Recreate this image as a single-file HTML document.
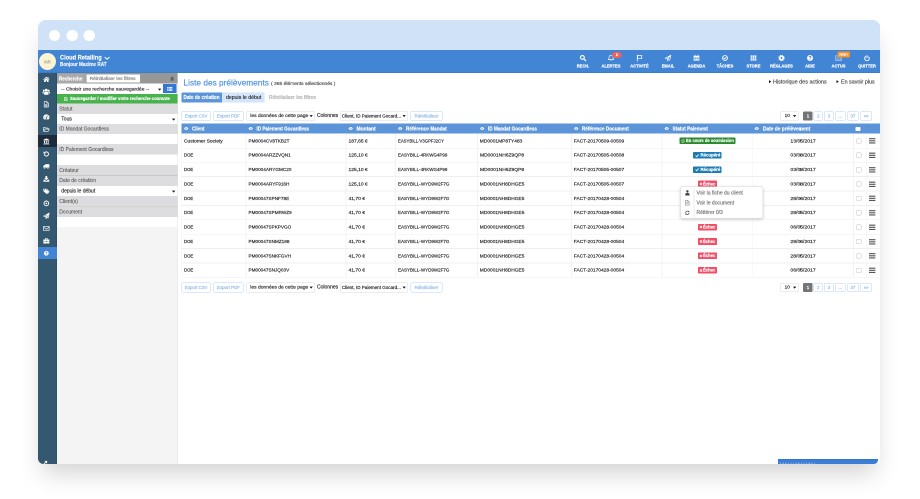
<!DOCTYPE html>
<html lang="fr"><head><meta charset="utf-8"><title>Liste des prélèvements</title>
<style>
html,body{margin:0;padding:0;background:#fff;}
html{overflow:hidden;}
body{width:920px;height:499px;overflow:hidden;position:relative;font-family:"Liberation Sans",sans-serif;}
#shadow{position:absolute;left:38px;top:20px;width:842.3px;height:444px;border-radius:8px 8px 5.5px 5.5px;box-shadow:0 14px 24px -5px rgba(0,0,0,.18);}
#win{position:absolute;left:38px;top:20px;width:1684.6px;height:888px;border-radius:16px 16px 11.0px 11.0px;overflow:hidden;background:#fff;transform:scale(0.5);transform-origin:0 0;will-change:transform;}
#win div,#win svg{position:absolute;white-space:nowrap;}
#win div{-webkit-text-stroke:.3px currentColor;}
#win svg{overflow:visible;}
</style></head><body>
<div id="shadow"></div>
<div id="win">
<div style="left:0px;top:0px;width:1684px;height:60.4px;background:#cfe2f8;"></div>
<div style="left:21.6px;top:19.6px;width:22.8px;height:22.8px;background:#fff;border-radius:50%;"></div>
<div style="left:57.2px;top:19.6px;width:22.8px;height:22.8px;background:#fff;border-radius:50%;"></div>
<div style="left:91.2px;top:19.6px;width:22.8px;height:22.8px;background:#fff;border-radius:50%;"></div>
<div style="left:0px;top:60px;width:1684px;height:46px;background:#4285d5;border-bottom:1.6px solid #3273c9;box-sizing:border-box;"></div>
<div style="left:2px;top:66.2px;width:34.2px;height:34.2px;background:#fdf4d3;border-radius:50%;"></div>
<div style="left:2px;top:73.6px;height:20px;line-height:20px;font-size:8.4px;color:#a3a398;width:34.2px;text-align:center;">MR</div>
<div style="left:44px;top:65.24px;height:20px;line-height:20px;font-size:12.8px;color:#fff;font-weight:700;transform:scaleX(0.889);transform-origin:0 50%;">Cloud Retailing</div>
<svg style="left:132.6px;top:73.1px;width:10.4px;height:7px;" viewBox="0 0 10 6"><path d="M1 1.200 L5 5 L9 1.200" fill="none" stroke="#fff" stroke-width="2" stroke-linecap="round" stroke-linejoin="round"/></svg>
<div style="left:44px;top:79.2px;height:20px;line-height:20px;font-size:10.2px;color:#f1f6fd;font-weight:700;transform:scaleX(0.910);transform-origin:0 50%;">Bonjour Maxime RAT</div>
<svg style="left:1082.6px;top:69px;width:14px;height:14px;" viewBox="0 0 16 16"><circle cx="6.600" cy="6.600" r="4.300" fill="none" stroke="#fff" stroke-width="2.600"/><path d="M10 10 L14.200 14.200" fill="none" stroke="#fff" stroke-width="3" stroke-linecap="round"/></svg>
<div style="left:1049.6px;top:82.3px;height:20px;line-height:20px;font-size:9.4px;color:#fff;font-weight:700;transform:scaleX(0.865);transform-origin:50% 50%;width:80px;text-align:center;-webkit-text-stroke:0.4px #fff;">RECH.</div>
<svg style="left:1139.44px;top:69px;width:14px;height:14px;" viewBox="0 0 16 16"><path d="M8 1.800c-2.700 0-4.300 2-4.300 4.600 0 2.600-.8 3.800-2 5h12.600c-1.200-1.200-2-2.400-2-5 0-2.600-1.600-4.600-4.300-4.600z" fill="none" stroke="#fff" stroke-width="1.500" stroke-linejoin="round"/><path d="M6.200 13a1.900 1.900 0 0 0 3.600 0z" fill="#fff"/></svg>
<div style="left:1106.44px;top:82.3px;height:20px;line-height:20px;font-size:9.4px;color:#fff;font-weight:700;transform:scaleX(0.865);transform-origin:50% 50%;width:80px;text-align:center;-webkit-text-stroke:0.4px #fff;">ALERTES</div>
<svg style="left:1196.28px;top:69px;width:14px;height:14px;" viewBox="0 0 16 16"><path d="M3 1.500v13.500" fill="none" stroke="#fff" stroke-width="1.800" stroke-linecap="round"/><path d="M3.600 2.600h10.200l-2 3.300 2 3.300H3.600z" fill="none" stroke="#fff" stroke-width="1.500" stroke-linejoin="round"/></svg>
<div style="left:1163.28px;top:82.3px;height:20px;line-height:20px;font-size:9.4px;color:#fff;font-weight:700;transform:scaleX(0.865);transform-origin:50% 50%;width:80px;text-align:center;-webkit-text-stroke:0.4px #fff;">ACTIVITÉ</div>
<svg style="left:1253.12px;top:69px;width:14px;height:14px;" viewBox="0 0 16 16"><path d="M14.600 1.400 L1.400 8.600 l4 1.600 L14.600 1.400 L7 11 v3.600 l2.200 -2.800 l3 1.200 z" fill="none" stroke="#fff" stroke-width="1.400" stroke-linejoin="round"/></svg>
<div style="left:1220.12px;top:82.3px;height:20px;line-height:20px;font-size:9.4px;color:#fff;font-weight:700;transform:scaleX(0.865);transform-origin:50% 50%;width:80px;text-align:center;-webkit-text-stroke:0.4px #fff;">EMAIL</div>
<svg style="left:1309.96px;top:69px;width:14px;height:14px;" viewBox="0 0 16 16"><path d="M1.500 3h13v11.500h-13z" fill="#fff"/><path d="M4.500 1v3.200M11.500 1v3.200" fill="none" stroke="#fff" stroke-width="1.700" stroke-linecap="round"/><path d="M2.800 6.200h10.400v7.100H2.800z" fill="#4285d5"/><path d="M3.500 6.900h2.500v2.300H3.500zM6.750 6.900h2.500v2.300H6.750zM10 6.900h2.500v2.300H10zM3.500 10.200h2.500v2.300H3.500zM6.750 10.200h2.500v2.300H6.750zM10 10.200h2.500v2.300H10z" fill="#fff"/></svg>
<div style="left:1276.96px;top:82.3px;height:20px;line-height:20px;font-size:9.4px;color:#fff;font-weight:700;transform:scaleX(0.865);transform-origin:50% 50%;width:80px;text-align:center;-webkit-text-stroke:0.4px #fff;">AGENDA</div>
<svg style="left:1366.8px;top:69px;width:14px;height:14px;" viewBox="0 0 16 16"><circle cx="8" cy="8" r="5.600" fill="none" stroke="#fff" stroke-width="2.100"/><path d="M5.400 8.200l1.900 1.900 3.500-3.800" fill="none" stroke="#fff" stroke-width="1.900" stroke-linecap="round" stroke-linejoin="round"/></svg>
<div style="left:1333.8px;top:82.3px;height:20px;line-height:20px;font-size:9.4px;color:#fff;font-weight:700;transform:scaleX(0.865);transform-origin:50% 50%;width:80px;text-align:center;-webkit-text-stroke:0.4px #fff;">TÂCHES</div>
<svg style="left:1423.64px;top:69px;width:14px;height:14px;" viewBox="0 0 16 16"><path d="M1.500 2h3.700v3.400H1.500zM6.150 2h3.700v3.400H6.150zM10.800 2h3.700v3.400h-3.700zM1.500 6.300h3.700v3.400H1.500zM6.150 6.300h3.700v3.400H6.150zM10.800 6.300h3.700v3.400h-3.700zM1.500 10.600h3.700v3.400H1.500zM6.150 10.600h3.700v3.400H6.150zM10.800 10.600h3.700v3.400h-3.700z" fill="#fff"/></svg>
<div style="left:1390.64px;top:82.3px;height:20px;line-height:20px;font-size:9.4px;color:#fff;font-weight:700;transform:scaleX(0.865);transform-origin:50% 50%;width:80px;text-align:center;-webkit-text-stroke:0.4px #fff;">STORE</div>
<svg style="left:1480.48px;top:69px;width:14px;height:14px;" viewBox="0 0 16 16"><circle cx="8" cy="8" r="4.100" fill="none" stroke="#fff" stroke-width="3.800"/><circle cx="8" cy="8" r="6.300" fill="none" stroke="#fff" stroke-width="2" stroke-dasharray="2.500 2.450"/></svg>
<div style="left:1447.48px;top:82.3px;height:20px;line-height:20px;font-size:9.4px;color:#fff;font-weight:700;transform:scaleX(0.865);transform-origin:50% 50%;width:80px;text-align:center;-webkit-text-stroke:0.4px #fff;">RÉGLAGES</div>
<svg style="left:1537.32px;top:69px;width:14px;height:14px;" viewBox="0 0 16 16"><circle cx="8" cy="8" r="6.800" fill="#fff"/><path d="M6 6.200c0-1.300.9-2.100 2.100-2.100s2 .8 2 1.800c0 1.600-2 1.600-2 3.200" fill="none" stroke="#4285d5" stroke-width="1.800"/><circle cx="8.100" cy="11.900" r="1.100" fill="#4285d5"/></svg>
<div style="left:1504.32px;top:82.3px;height:20px;line-height:20px;font-size:9.4px;color:#fff;font-weight:700;transform:scaleX(0.865);transform-origin:50% 50%;width:80px;text-align:center;-webkit-text-stroke:0.4px #fff;">AIDE</div>
<svg style="left:1594.16px;top:69px;width:14px;height:14px;" viewBox="0 0 16 16"><path d="M1.200 3h10.600v10.600H1.200z" fill="none" stroke="#fff" stroke-width="1.400" opacity=".62"/><path d="M3.200 5.600h6.600M3.200 8.200h6.600M3.200 10.800h6.600" fill="none" stroke="#fff" stroke-width="1.200" opacity=".62"/><path d="M11.800 6h3v7.600h-3" fill="none" stroke="#fff" stroke-width="1.400" opacity=".62"/></svg>
<div style="left:1561.16px;top:82.3px;height:20px;line-height:20px;font-size:9.4px;color:#fff;font-weight:700;transform:scaleX(0.865);transform-origin:50% 50%;width:80px;text-align:center;-webkit-text-stroke:0.4px #fff;">ACTUS</div>
<svg style="left:1651px;top:69px;width:14px;height:14px;" viewBox="0 0 16 16"><circle cx="8" cy="8.800" r="5.300" fill="none" stroke="#fff" stroke-width="2.200" stroke-dasharray="27.300 6" stroke-dashoffset="5.320"/><path d="M8 2.400v5" fill="none" stroke="#fff" stroke-width="2.200" stroke-linecap="round"/></svg>
<div style="left:1618px;top:82.3px;height:20px;line-height:20px;font-size:9.4px;color:#fff;font-weight:700;transform:scaleX(0.865);transform-origin:50% 50%;width:80px;text-align:center;-webkit-text-stroke:0.4px #fff;">QUITTER</div>
<div style="left:1147.8px;top:64.4px;width:19.6px;height:11.2px;background:#f06161;border-radius:5.6px;"></div>
<div style="left:1147.8px;top:60px;height:20px;line-height:20px;font-size:6.8px;color:#fff;font-weight:700;width:19.6px;text-align:center;">8</div>
<div style="left:1599.2px;top:62.6px;width:25px;height:12.4px;background:#f6932c;border-radius:3.2px;"></div>
<div style="left:1599.2px;top:58.8px;height:20px;line-height:20px;font-size:6px;color:#fff;font-weight:700;width:25px;text-align:center;">NEW !</div>
<div style="left:0px;top:106px;width:38px;height:782px;background:#34586f;"></div>
<div style="left:36.4px;top:106px;width:1.6px;height:782px;background:#2b5069;"></div>
<svg style="left:10.1px;top:112.3px;width:13.4px;height:13.4px;" viewBox="0 0 16 16"><path d="M8 1.800 L.4 8.300l1.100 1.300L8 4.100l6.500 5.500 1.100-1.300L13.200 6.200V2.800h-2v1.700z" fill="#fff"/><path d="M8 5.300 L2.700 9.800V14.400h3.900V10.800h2.800v3.600h3.900V9.800z" fill="#fff"/></svg>
<svg style="left:9.3px;top:136.3px;width:15px;height:15px;" viewBox="0 0 16 16"><circle cx="8" cy="4.700" r="3" fill="#fff"/><circle cx="2.900" cy="5.500" r="2.100" fill="#fff"/><circle cx="13.100" cy="5.500" r="2.100" fill="#fff"/><path d="M3.300 14.400v-3.200c0-2 1.500-3.300 3-3.300.5.400 1.100.6 1.700.6s1.200-.2 1.700-.6c1.500 0 3 1.300 3 3.300v3.200z" fill="#fff"/><path d="M0 11.800V10.400c0-1.600 1-2.700 2.300-2.700.4.300.8.500 1.300.5-.8.800-1.200 1.800-1.200 3.600zM16 11.800V10.400c0-1.600-1-2.700-2.300-2.700-.4.300-.8.500-1.300.5.800.8 1.200 1.800 1.200 3.600z" fill="#fff"/></svg>
<svg style="left:10.2px;top:162px;width:13.2px;height:13.2px;" viewBox="0 0 16 16"><path d="M3 1.400h6.400l3.600 3.600v9.600H3z" fill="none" stroke="#fff" stroke-width="1.600" stroke-linejoin="round"/><path d="M9.200 1.600v3.600h3.600" fill="none" stroke="#fff" stroke-width="1.300"/><path d="M5.200 8h5.600M5.200 10h5.600M5.200 12h5.600" fill="none" stroke="#fff" stroke-width="1.200"/></svg>
<svg style="left:10.1px;top:186.7px;width:13.4px;height:13.4px;" viewBox="0 0 16 16"><path d="M8 2a7.300 7.300 0 0 0-6.200 11.300c.2.400.6.700 1 .7h10.400c.4 0 .8-.3 1-.7A7.300 7.300 0 0 0 8 2z" fill="#fff"/><path d="M8 11.400 L10.300 5.800" stroke="#34586f" stroke-width="1.500" fill="none" stroke-linecap="round"/><circle cx="8" cy="11.300" r="1.600" fill="#34586f"/><circle cx="3.800" cy="9.400" r=".8" fill="#34586f"/><circle cx="5" cy="6" r=".8" fill="#34586f"/><circle cx="12.200" cy="9.400" r=".8" fill="#34586f"/></svg>
<svg style="left:10.1px;top:211.5px;width:13.4px;height:13.4px;" viewBox="0 0 16 16"><path d="M1.300 12.600v-9.200h4l1.400 1.600h5.600v2.200" fill="none" stroke="#fff" stroke-width="1.500" stroke-linejoin="round"/><path d="M1.500 12.800 L4.300 7.400h10.700l-2.800 5.400z" fill="none" stroke="#fff" stroke-width="1.500" stroke-linejoin="round"/></svg>
<div style="left:0px;top:229.8px;width:38px;height:24px;background:#1d2b3a;"></div>
<svg style="left:10.1px;top:236.3px;width:13.4px;height:13.4px;" viewBox="0 0 16 16"><path d="M8 .8 L.8 4.400v1.400h14.400V4.400z M2.400 6.600h2.400v5H2.400zM6.800 6.600h2.400v5H6.800zM11.200 6.600h2.400v5h-2.400zM1.600 12.100h12.800v1.300H1.600zM.8 13.900h14.400v1.400H.8z" fill="#fff"/></svg>
<svg style="left:10.1px;top:261.1px;width:13.4px;height:13.4px;" viewBox="0 0 16 16"><path d="M3.300 9.600A5 5 0 1 0 5 4.400" fill="none" stroke="#fff" stroke-width="2.300" stroke-linecap="round"/><path d="M1.300 1.700v5.700h5.700z" fill="#fff"/></svg>
<svg style="left:10.1px;top:285.9px;width:13.4px;height:13.4px;" viewBox="0 0 16 16"><path d="M5.400 2.800h9.800v8.600H5.400z" fill="#fff"/><path d="M.8 7.400 L2.800 4.800h2.600v6.600H.8z" fill="#fff"/><circle cx="4" cy="12.200" r="1.900" fill="#fff" stroke="#34586f" stroke-width=".9"/><circle cx="11.800" cy="12.200" r="1.900" fill="#fff" stroke="#34586f" stroke-width=".9"/></svg>
<svg style="left:10.1px;top:310.7px;width:13.4px;height:13.4px;" viewBox="0 0 16 16"><path d="M5.800 1.200h4.400v4.800h3L8 11.200 2.800 6h3z" fill="#fff"/><path d="M1.200 10.200h3.400L8 13.400l3.400-3.200h3.400v4.600H1.200z" fill="#fff"/></svg>
<svg style="left:10.1px;top:335.5px;width:13.4px;height:13.4px;" viewBox="0 0 16 16"><path d="M.8 1.800h5.600l7.200 7.200-5.400 5.400L.8 7.200z" fill="#fff"/><path d="M8.400 1.800h1.600l5.600 7.200-4.600 5.600-1.200-1 3.700-4.600z" fill="#fff"/><circle cx="3.600" cy="4.600" r="1.200" fill="#34586f"/></svg>
<svg style="left:10.1px;top:360.3px;width:13.4px;height:13.4px;" viewBox="0 0 16 16"><circle cx="8" cy="8" r="5.600" fill="none" stroke="#fff" stroke-width="2.300"/><circle cx="8" cy="8" r="2.100" fill="#fff"/></svg>
<svg style="left:10.1px;top:385.1px;width:13.4px;height:13.4px;" viewBox="0 0 16 16"><path d="M14.800 1.200 L1.200 8.600l4 1.700L14.800 1.200 7 11.100v3.700l2.300-2.900 3.100 1.300z" fill="none" stroke="#fff" stroke-width="1.500" stroke-linejoin="round"/><path d="M14.800 1.200 L7 11.100l5.400 2.100z" fill="#fff" opacity=".55"/></svg>
<svg style="left:10.1px;top:409.9px;width:13.4px;height:13.4px;" viewBox="0 0 16 16"><path d="M1.400 3.200h13.200v9.800H1.400z" fill="none" stroke="#fff" stroke-width="1.600" stroke-linejoin="round"/><path d="M1.600 5.400 L8 10l6.400-4.600" fill="none" stroke="#fff" stroke-width="1.500"/></svg>
<svg style="left:10.1px;top:434.7px;width:13.4px;height:13.4px;" viewBox="0 0 16 16"><path d="M.8 4.800h14.400v3.800H.8zM.8 9.400h5.800v1.400h2.800V9.400h5.800v5H.8z" fill="#fff"/><path d="M5.400 4.800V2.600h5.200v2.200" fill="none" stroke="#fff" stroke-width="1.500"/></svg>
<div style="left:0px;top:454px;width:38px;height:23.6px;background:#4285d5;"></div>
<svg style="left:11.2px;top:460.6px;width:11.2px;height:11.2px;" viewBox="0 0 16 16"><circle cx="8" cy="8" r="6.800" fill="#fff"/><path d="M6 6.200c0-1.300.9-2.100 2.100-2.100s2 .8 2 1.800c0 1.600-2 1.600-2 3.200" fill="none" stroke="#4285d5" stroke-width="1.800"/><circle cx="8.100" cy="11.900" r="1.100" fill="#4285d5"/></svg>
<svg style="left:8.4px;top:880.4px;width:12px;height:12px;" viewBox="0 0 16 16"><path d="M3 13 L12 4M8 3.400h4.600V8" fill="none" stroke="#fff" stroke-width="2.200" stroke-linecap="round"/></svg>
<div style="left:38px;top:106px;width:240.6px;height:782px;background:#f4f4f4;"></div>
<div style="left:278.6px;top:106px;width:1.6px;height:782px;background:#e2e2e2;"></div>
<div style="left:38px;top:106px;width:240.6px;height:21px;background:#979797;"></div>
<div style="left:38.8px;top:106.6px;width:55.8px;height:20.4px;background:#a9a9a9;"></div>
<div style="left:42.4px;top:107.08px;height:20px;line-height:20px;font-size:10.6px;color:#fff;font-weight:700;transform:scaleX(0.863);transform-origin:0 50%;">Recherche</div>
<div style="left:96.8px;top:108.8px;width:107.6px;height:16.6px;background:#fff;"></div>
<div style="left:103.2px;top:106.96px;height:20px;line-height:20px;font-size:9.8px;color:#7d7d7d;">Réinitialiser les filtres</div>
<svg style="left:264.7px;top:113.3px;width:6.6px;height:8.6px;" viewBox="0 0 10 12"><path d="M1 3.200h8v8.800H1zM0 1.400h10v1.200H0zM3.400 0h3.200v1.400H3.400z" fill="#5a5a5a"/></svg>
<div style="left:38px;top:127px;width:210.8px;height:20.8px;background:#fff;"></div>
<div style="left:46.6px;top:128.26px;height:20px;line-height:20px;font-size:9.92px;color:#2a2a2a;">-- Choisir une recherche sauvegardée --</div>
<svg style="left:239.5px;top:136.5px;width:6.6px;height:4.6px;" viewBox="0 0 10 6"><path d="M0 0h10L5 6z" fill="#111"/></svg>
<div style="left:249.8px;top:128px;width:26.8px;height:18.4px;background:#3276d8;"></div>
<svg style="left:257.6px;top:133.6px;width:10.8px;height:7.6px;" viewBox="0 0 12 8"><path d="M0 0h2v2H0zM3 0h9v2H3zM0 3h2v2H0zM3 3h9v2H3zM0 6h2v2H0zM3 6h9v2H3z" fill="#fff"/></svg>
<div style="left:38px;top:147.8px;width:240.6px;height:19.6px;background:#48b24c;"></div>
<svg style="left:52.1px;top:153.7px;width:7.4px;height:7.8px;" viewBox="0 0 11 12"><path d="M1 1h7l2 2v8H1z" fill="none" stroke="#fff" stroke-width="1.500"/><path d="M3 1v3h4V1M3 11V7.500h5V11" fill="none" stroke="#fff" stroke-width="1.200"/></svg>
<div style="left:64.2px;top:147.46px;height:20px;line-height:20px;font-size:9.6px;color:#fff;font-weight:700;transform:scaleX(0.901);transform-origin:0 50%;">Sauvegarder / modifier votre recherche courante</div>
<div style="left:38px;top:167.4px;width:240.6px;height:20.4px;background:#dddcde;"></div>
<div style="left:42.6px;top:167.66px;height:20px;line-height:20px;font-size:10px;color:#686868;">Statut</div>
<div style="left:38px;top:187.8px;width:240.6px;height:20.2px;background:#fff;"></div>
<div style="left:46.6px;top:187.96px;height:20px;line-height:20px;font-size:10px;color:#2a2a2a;">Tous</div>
<svg style="left:268.3px;top:196.6px;width:6.6px;height:4.6px;" viewBox="0 0 10 6"><path d="M0 0h10L5 6z" fill="#111"/></svg>
<div style="left:38px;top:208px;width:240.6px;height:20.4px;background:#dddcde;"></div>
<div style="left:42.6px;top:208.24px;height:20px;line-height:20px;font-size:10px;color:#686868;">ID Mandat Gocardless</div>
<div style="left:38px;top:228.4px;width:240.6px;height:20px;background:#fff;"></div>
<div style="left:38px;top:248.4px;width:240.6px;height:20.8px;background:#dddcde;"></div>
<div style="left:42.6px;top:248.84px;height:20px;line-height:20px;font-size:10px;color:#686868;">ID Paiement Gocardless</div>
<div style="left:38px;top:269.2px;width:240.6px;height:20.8px;background:#fff;"></div>
<div style="left:38px;top:290px;width:240.6px;height:21px;background:#dddcde;"></div>
<div style="left:42.6px;top:290.54px;height:20px;line-height:20px;font-size:10px;color:#686868;">Créateur</div>
<div style="left:38px;top:311px;width:240.6px;height:20.6px;background:#dddcde;"></div>
<div style="left:38px;top:310.4px;width:240.6px;height:1.2px;background:#c9c9c9;"></div>
<div style="left:42.6px;top:311.34px;height:20px;line-height:20px;font-size:10px;color:#686868;">Date de création</div>
<div style="left:38px;top:331.6px;width:240.6px;height:20.4px;background:#fff;"></div>
<div style="left:46.6px;top:331.84px;height:20px;line-height:20px;font-size:10px;color:#2a2a2a;">depuis le début</div>
<svg style="left:268.3px;top:340.5px;width:6.6px;height:4.6px;" viewBox="0 0 10 6"><path d="M0 0h10L5 6z" fill="#111"/></svg>
<div style="left:38px;top:352px;width:240.6px;height:21.4px;background:#dddcde;"></div>
<div style="left:42.6px;top:352.74px;height:20px;line-height:20px;font-size:10px;color:#686868;">Client(s)</div>
<div style="left:38px;top:373.4px;width:240.6px;height:20.4px;background:#dddcde;"></div>
<div style="left:38px;top:372.8px;width:240.6px;height:1.2px;background:#c9c9c9;"></div>
<div style="left:42.6px;top:373.64px;height:20px;line-height:20px;font-size:10px;color:#686868;">Document</div>
<div style="left:38px;top:393.8px;width:240.6px;height:20.2px;background:#fff;"></div>
<div style="left:280.2px;top:106px;width:1404px;height:782px;background:#fff;"></div>
<div style="left:290.8px;top:115.46px;height:20px;line-height:20px;font-size:17.2px;color:#4a8fe0;transform:scaleX(0.966);transform-origin:0 50%;">Liste des prélèvements</div>
<div style="left:466.4px;top:116.88px;height:20px;line-height:20px;font-size:9.4px;color:#4a4a4a;transform:scaleX(1.052);transform-origin:0 50%;">( 365 éléments sélectionnés )</div>
<svg style="left:1461.7px;top:120.3px;width:4.6px;height:6.6px;" viewBox="0 0 6 8"><path d="M0 0l6 4-6 4z" fill="#111"/></svg>
<div style="left:1470.2px;top:113.02px;height:20px;line-height:20px;font-size:10.6px;color:#484848;transform:scaleX(1.032);transform-origin:0 50%;">Historique des actions</div>
<svg style="left:1597.1px;top:120.3px;width:4.6px;height:6.6px;" viewBox="0 0 6 8"><path d="M0 0l6 4-6 4z" fill="#111"/></svg>
<div style="left:1605.6px;top:113.02px;height:20px;line-height:20px;font-size:10.6px;color:#484848;transform:scaleX(1.012);transform-origin:0 50%;">En savoir plus</div>
<div style="left:286.8px;top:145.2px;width:81.2px;height:19.8px;background:#5b94d8;border-radius:2px 0 0 2px;"></div>
<div style="left:291.4px;top:144.64px;height:20px;line-height:20px;font-size:10.4px;color:#fff;font-weight:700;transform:scaleX(0.892);transform-origin:0 50%;">Date de création</div>
<div style="left:368px;top:145.2px;width:85px;height:19.8px;background:#d3e5fa;"></div>
<div style="left:375.8px;top:144.64px;height:20px;line-height:20px;font-size:10.2px;color:#1c1c1c;transform:scaleX(1.020);transform-origin:0 50%;-webkit-text-stroke:0.24px #1c1c1c;">depuis le début</div>
<div style="left:462px;top:144.66px;height:20px;line-height:20px;font-size:10px;color:#ababab;">Réinitialiser les filtres</div>
<div style="left:287px;top:182.2px;width:59.4px;height:19.6px;border:1.4px solid #b5d2f5;border-radius:3px;box-sizing:border-box;background:#fff;"></div>
<div style="left:294.2px;top:181.66px;height:20px;line-height:20px;font-size:9.8px;color:#8db7ea;transform:scaleX(0.879);transform-origin:0 50%;">Export CSV</div>
<div style="left:351.4px;top:182.2px;width:59.6px;height:19.6px;border:1.4px solid #b5d2f5;border-radius:3px;box-sizing:border-box;background:#fff;"></div>
<div style="left:358.2px;top:181.66px;height:20px;line-height:20px;font-size:9.8px;color:#8db7ea;transform:scaleX(0.904);transform-origin:0 50%;">Export PDF</div>
<div style="left:416.6px;top:182.2px;width:137.2px;height:19.6px;border:1.4px solid #dadada;border-radius:2.4px;box-sizing:border-box;background:#fff;"></div>
<div style="left:424.6px;top:180.66px;height:20px;line-height:20px;font-size:9.9px;color:#1e1e1e;">les données de cette page</div>
<svg style="left:543.3px;top:190.3px;width:6.6px;height:4.6px;" viewBox="0 0 10 6"><path d="M0 0h10L5 6z" fill="#111"/></svg>
<div style="left:558px;top:181.24px;height:20px;line-height:20px;font-size:10px;color:#1e1e1e;">Colonnes</div>
<div style="left:604px;top:182.2px;width:136.4px;height:19.6px;border:1.4px solid #dadada;border-radius:2.4px;box-sizing:border-box;background:#fff;"></div>
<div style="left:607.6px;top:181.68px;height:20px;line-height:20px;font-size:9.1px;color:#1e1e1e;">Client, ID Paiement Gocard...</div>
<svg style="left:729.3px;top:190.1px;width:6.6px;height:4.6px;" viewBox="0 0 10 6"><path d="M0 0h10L5 6z" fill="#111"/></svg>
<div style="left:744.8px;top:182.2px;width:63.8px;height:19.6px;border:1.4px solid #b5d2f5;border-radius:3px;box-sizing:border-box;background:#fff;"></div>
<div style="left:752.8px;top:181.66px;height:20px;line-height:20px;font-size:9.8px;color:#8db7ea;transform:scaleX(0.940);transform-origin:0 50%;">Réinitialiser</div>
<div style="left:1484px;top:182.8px;width:37.8px;height:18px;border:1.4px solid #dadada;border-radius:2.4px;box-sizing:border-box;background:#fff;"></div>
<div style="left:1493.2px;top:181.48px;height:20px;line-height:20px;font-size:9.4px;color:#1e1e1e;">10</div>
<svg style="left:1509.7px;top:190.3px;width:6.6px;height:4.6px;" viewBox="0 0 10 6"><path d="M0 0h10L5 6z" fill="#111"/></svg>
<div style="left:1530.4px;top:182.8px;width:18.8px;height:18.4px;background:#757575;border-radius:2.6px;box-sizing:border-box;"></div>
<div style="left:1530.4px;top:182px;height:20px;line-height:20px;font-size:8.6px;color:#fff;font-weight:700;width:18.8px;text-align:center;">1</div>
<div style="left:1551.4px;top:182.8px;width:18.4px;height:18.4px;border:1.4px solid #b5d2f5;background:#fff;border-radius:2.6px;box-sizing:border-box;"></div>
<div style="left:1551.4px;top:182px;height:20px;line-height:20px;font-size:8.6px;color:#8db7ea;width:18.4px;text-align:center;">2</div>
<div style="left:1572px;top:182.8px;width:19.6px;height:18.4px;border:1.4px solid #b5d2f5;background:#fff;border-radius:2.6px;box-sizing:border-box;"></div>
<div style="left:1572px;top:182px;height:20px;line-height:20px;font-size:8.6px;color:#8db7ea;width:19.6px;text-align:center;">3</div>
<div style="left:1594px;top:182.8px;width:21px;height:18.4px;border:1.4px solid #b5d2f5;background:#fff;border-radius:2.6px;box-sizing:border-box;"></div>
<div style="left:1594px;top:182px;height:20px;line-height:20px;font-size:8.6px;color:#8db7ea;width:21px;text-align:center;">...</div>
<div style="left:1617.6px;top:182.8px;width:24.4px;height:18.4px;border:1.4px solid #b5d2f5;background:#fff;border-radius:2.6px;box-sizing:border-box;"></div>
<div style="left:1617.6px;top:182px;height:20px;line-height:20px;font-size:8.6px;color:#8db7ea;width:24.4px;text-align:center;">37</div>
<div style="left:1644.4px;top:182.8px;width:23.6px;height:18.4px;border:1.4px solid #b5d2f5;background:#fff;border-radius:2.6px;box-sizing:border-box;"></div>
<div style="left:1644.4px;top:182px;height:20px;line-height:20px;font-size:8.6px;color:#8db7ea;width:23.6px;text-align:center;">»»</div>
<div style="left:287px;top:525.2px;width:59.4px;height:19.6px;border:1.4px solid #b5d2f5;border-radius:3px;box-sizing:border-box;background:#fff;"></div>
<div style="left:294.2px;top:524.66px;height:20px;line-height:20px;font-size:9.8px;color:#8db7ea;transform:scaleX(0.879);transform-origin:0 50%;">Export CSV</div>
<div style="left:351.4px;top:525.2px;width:59.6px;height:19.6px;border:1.4px solid #b5d2f5;border-radius:3px;box-sizing:border-box;background:#fff;"></div>
<div style="left:358.2px;top:524.66px;height:20px;line-height:20px;font-size:9.8px;color:#8db7ea;transform:scaleX(0.904);transform-origin:0 50%;">Export PDF</div>
<div style="left:416.6px;top:525.2px;width:137.2px;height:19.6px;border:1.4px solid #dadada;border-radius:2.4px;box-sizing:border-box;background:#fff;"></div>
<div style="left:424.6px;top:523.66px;height:20px;line-height:20px;font-size:9.9px;color:#1e1e1e;">les données de cette page</div>
<svg style="left:543.3px;top:533.3px;width:6.6px;height:4.6px;" viewBox="0 0 10 6"><path d="M0 0h10L5 6z" fill="#111"/></svg>
<div style="left:558px;top:524.24px;height:20px;line-height:20px;font-size:10px;color:#1e1e1e;">Colonnes</div>
<div style="left:604px;top:525.2px;width:136.4px;height:19.6px;border:1.4px solid #dadada;border-radius:2.4px;box-sizing:border-box;background:#fff;"></div>
<div style="left:607.6px;top:524.68px;height:20px;line-height:20px;font-size:9.1px;color:#1e1e1e;">Client, ID Paiement Gocard...</div>
<svg style="left:729.3px;top:533.1px;width:6.6px;height:4.6px;" viewBox="0 0 10 6"><path d="M0 0h10L5 6z" fill="#111"/></svg>
<div style="left:744.8px;top:525.2px;width:63.8px;height:19.6px;border:1.4px solid #b5d2f5;border-radius:3px;box-sizing:border-box;background:#fff;"></div>
<div style="left:752.8px;top:524.66px;height:20px;line-height:20px;font-size:9.8px;color:#8db7ea;transform:scaleX(0.940);transform-origin:0 50%;">Réinitialiser</div>
<div style="left:1484px;top:525.8px;width:37.8px;height:18px;border:1.4px solid #dadada;border-radius:2.4px;box-sizing:border-box;background:#fff;"></div>
<div style="left:1493.2px;top:524.48px;height:20px;line-height:20px;font-size:9.4px;color:#1e1e1e;">10</div>
<svg style="left:1509.7px;top:533.3px;width:6.6px;height:4.6px;" viewBox="0 0 10 6"><path d="M0 0h10L5 6z" fill="#111"/></svg>
<div style="left:1530.4px;top:525.8px;width:18.8px;height:18.4px;background:#757575;border-radius:2.6px;box-sizing:border-box;"></div>
<div style="left:1530.4px;top:525px;height:20px;line-height:20px;font-size:8.6px;color:#fff;font-weight:700;width:18.8px;text-align:center;">1</div>
<div style="left:1551.4px;top:525.8px;width:18.4px;height:18.4px;border:1.4px solid #b5d2f5;background:#fff;border-radius:2.6px;box-sizing:border-box;"></div>
<div style="left:1551.4px;top:525px;height:20px;line-height:20px;font-size:8.6px;color:#8db7ea;width:18.4px;text-align:center;">2</div>
<div style="left:1572px;top:525.8px;width:19.6px;height:18.4px;border:1.4px solid #b5d2f5;background:#fff;border-radius:2.6px;box-sizing:border-box;"></div>
<div style="left:1572px;top:525px;height:20px;line-height:20px;font-size:8.6px;color:#8db7ea;width:19.6px;text-align:center;">3</div>
<div style="left:1594px;top:525.8px;width:21px;height:18.4px;border:1.4px solid #b5d2f5;background:#fff;border-radius:2.6px;box-sizing:border-box;"></div>
<div style="left:1594px;top:525px;height:20px;line-height:20px;font-size:8.6px;color:#8db7ea;width:21px;text-align:center;">...</div>
<div style="left:1617.6px;top:525.8px;width:24.4px;height:18.4px;border:1.4px solid #b5d2f5;background:#fff;border-radius:2.6px;box-sizing:border-box;"></div>
<div style="left:1617.6px;top:525px;height:20px;line-height:20px;font-size:8.6px;color:#8db7ea;width:24.4px;text-align:center;">37</div>
<div style="left:1644.4px;top:525.8px;width:23.6px;height:18.4px;border:1.4px solid #b5d2f5;background:#fff;border-radius:2.6px;box-sizing:border-box;"></div>
<div style="left:1644.4px;top:525px;height:20px;line-height:20px;font-size:8.6px;color:#8db7ea;width:23.6px;text-align:center;">»»</div>
<div style="left:287.2px;top:206.8px;width:1396.8px;height:20px;background:#5b94d8;"></div>
<svg style="left:291.8px;top:214.1px;width:8.8px;height:6.2px;" viewBox="0 0 14 10"><path d="M0 5C2 1.500 4.500 0 7 0s5 1.500 7 5c-2 3.500-4.500 5-7 5S2 8.500 0 5z" fill="#fff"/><circle cx="7" cy="5" r="2.700" fill="#5b94d8"/><circle cx="7" cy="5" r="1.300" fill="#fff"/></svg>
<div style="left:308px;top:207.56px;height:20px;line-height:20px;font-size:10px;color:#fff;font-weight:700;transform:scaleX(0.900);transform-origin:0 50%;">Client</div>
<svg style="left:420.6px;top:214.1px;width:8.8px;height:6.2px;" viewBox="0 0 14 10"><path d="M0 5C2 1.500 4.500 0 7 0s5 1.500 7 5c-2 3.500-4.500 5-7 5S2 8.500 0 5z" fill="#fff"/><circle cx="7" cy="5" r="2.700" fill="#5b94d8"/><circle cx="7" cy="5" r="1.300" fill="#fff"/></svg>
<div style="left:436.8px;top:207.56px;height:20px;line-height:20px;font-size:10px;color:#fff;font-weight:700;transform:scaleX(0.919);transform-origin:0 50%;">ID Paiement Gocardless</div>
<svg style="left:620.6px;top:214.1px;width:8.8px;height:6.2px;" viewBox="0 0 14 10"><path d="M0 5C2 1.500 4.500 0 7 0s5 1.500 7 5c-2 3.500-4.500 5-7 5S2 8.500 0 5z" fill="#fff"/><circle cx="7" cy="5" r="2.700" fill="#5b94d8"/><circle cx="7" cy="5" r="1.300" fill="#fff"/></svg>
<div style="left:636.8px;top:207.56px;height:20px;line-height:20px;font-size:10px;color:#fff;font-weight:700;transform:scaleX(0.988);transform-origin:0 50%;">Montant</div>
<svg style="left:719.6px;top:214.1px;width:8.8px;height:6.2px;" viewBox="0 0 14 10"><path d="M0 5C2 1.500 4.500 0 7 0s5 1.500 7 5c-2 3.500-4.500 5-7 5S2 8.500 0 5z" fill="#fff"/><circle cx="7" cy="5" r="2.700" fill="#5b94d8"/><circle cx="7" cy="5" r="1.300" fill="#fff"/></svg>
<div style="left:735.8px;top:207.56px;height:20px;line-height:20px;font-size:10px;color:#fff;font-weight:700;transform:scaleX(0.946);transform-origin:0 50%;">Référence Mandat</div>
<svg style="left:883.6px;top:214.1px;width:8.8px;height:6.2px;" viewBox="0 0 14 10"><path d="M0 5C2 1.500 4.500 0 7 0s5 1.500 7 5c-2 3.500-4.500 5-7 5S2 8.500 0 5z" fill="#fff"/><circle cx="7" cy="5" r="2.700" fill="#5b94d8"/><circle cx="7" cy="5" r="1.300" fill="#fff"/></svg>
<div style="left:899.8px;top:207.56px;height:20px;line-height:20px;font-size:10px;color:#fff;font-weight:700;transform:scaleX(0.933);transform-origin:0 50%;">ID Mandat Gocardless</div>
<svg style="left:1071.6px;top:214.1px;width:8.8px;height:6.2px;" viewBox="0 0 14 10"><path d="M0 5C2 1.500 4.500 0 7 0s5 1.500 7 5c-2 3.500-4.500 5-7 5S2 8.500 0 5z" fill="#fff"/><circle cx="7" cy="5" r="2.700" fill="#5b94d8"/><circle cx="7" cy="5" r="1.300" fill="#fff"/></svg>
<div style="left:1087.8px;top:207.56px;height:20px;line-height:20px;font-size:10px;color:#fff;font-weight:700;transform:scaleX(0.935);transform-origin:0 50%;">Référence Document</div>
<svg style="left:1252.6px;top:214.1px;width:8.8px;height:6.2px;" viewBox="0 0 14 10"><path d="M0 5C2 1.500 4.500 0 7 0s5 1.500 7 5c-2 3.500-4.500 5-7 5S2 8.500 0 5z" fill="#fff"/><circle cx="7" cy="5" r="2.700" fill="#5b94d8"/><circle cx="7" cy="5" r="1.300" fill="#fff"/></svg>
<div style="left:1268.8px;top:207.56px;height:20px;line-height:20px;font-size:10px;color:#fff;font-weight:700;transform:scaleX(0.939);transform-origin:0 50%;">Statut Paiement</div>
<svg style="left:1433.4px;top:214.1px;width:8.8px;height:6.2px;" viewBox="0 0 14 10"><path d="M0 5C2 1.500 4.500 0 7 0s5 1.500 7 5c-2 3.500-4.500 5-7 5S2 8.500 0 5z" fill="#fff"/><circle cx="7" cy="5" r="2.700" fill="#5b94d8"/><circle cx="7" cy="5" r="1.300" fill="#fff"/></svg>
<div style="left:1449.6px;top:207.56px;height:20px;line-height:20px;font-size:10px;color:#fff;font-weight:700;transform:scaleX(0.965);transform-origin:0 50%;">Date de prélèvement</div>
<div style="left:1635.2px;top:213.6px;width:10.2px;height:8.8px;background:#fff;border-radius:1.6px;"></div>
<div style="left:415.3px;top:227px;width:1.4px;height:287.6px;background:#f3f3f3;"></div>
<div style="left:615.3px;top:227px;width:1.4px;height:287.6px;background:#f3f3f3;"></div>
<div style="left:714.3px;top:227px;width:1.4px;height:287.6px;background:#f3f3f3;"></div>
<div style="left:878.3px;top:227px;width:1.4px;height:287.6px;background:#f3f3f3;"></div>
<div style="left:1066.3px;top:227px;width:1.4px;height:287.6px;background:#f3f3f3;"></div>
<div style="left:1247.3px;top:227px;width:1.4px;height:287.6px;background:#f3f3f3;"></div>
<div style="left:1428.1px;top:227px;width:1.4px;height:287.6px;background:#f3f3f3;"></div>
<div style="left:1630.3px;top:227px;width:1.4px;height:287.6px;background:#f3f3f3;"></div>
<div style="left:1656.1px;top:227px;width:1.4px;height:287.6px;background:#f3f3f3;"></div>
<div style="left:286.6px;top:227px;width:1.4px;height:287.6px;background:#f3f3f3;"></div>
<div style="left:287.2px;top:254.96px;width:1396.8px;height:1.6px;background:#efefef;"></div>
<div style="left:291.8px;top:231.54px;height:20px;line-height:20px;font-size:9.7px;color:#1e1e1e;transform:scaleX(1.014);transform-origin:0 50%;">Customer Society</div>
<div style="left:420.6px;top:231.54px;height:20px;line-height:20px;font-size:9.7px;color:#1e1e1e;transform:scaleX(0.963);transform-origin:0 50%;">PM0004CV8TKB2T</div>
<div style="left:620.6px;top:231.54px;height:20px;line-height:20px;font-size:9.7px;color:#1e1e1e;transform:scaleX(1.017);transform-origin:0 50%;">187,65 €</div>
<div style="left:719.6px;top:231.54px;height:20px;line-height:20px;font-size:9.7px;color:#1e1e1e;transform:scaleX(0.880);transform-origin:0 50%;">EASYBILL-V3GPFJ2CY</div>
<div style="left:883.6px;top:231.54px;height:20px;line-height:20px;font-size:9.7px;color:#1e1e1e;">MD0001MP8TY483</div>
<div style="left:1071.6px;top:231.54px;height:20px;line-height:20px;font-size:9.7px;color:#1e1e1e;">FACT-20170509-00509</div>
<div style="left:1282.8px;top:234.98px;width:112.4px;height:13.4px;background:#2b8a2e;border-radius:1.8px;"></div>
<svg style="left:1285.5px;top:237.58px;width:8.2px;height:8.2px;" viewBox="0 0 16 16"><path d="M13 8a5 5 0 0 1-9 3M3 8a5 5 0 0 1 9-3" fill="none" stroke="#fff" stroke-width="2.100"/><path d="M13 1.500V6H8.500zM3 14.500V10h4.500z" fill="#fff"/></svg>
<div style="left:1295.6px;top:231.34px;height:20px;line-height:20px;font-size:9.6px;color:#fff;font-weight:700;transform:scaleX(0.863);transform-origin:0 50%;">En cours de soumission</div>
<div style="left:1428.8px;top:231.54px;height:20px;line-height:20px;font-size:9.7px;color:#1e1e1e;transform:scaleX(1.040);transform-origin:50% 50%;width:202.2px;text-align:center;">13/05/2017</div>
<div style="left:1636.4px;top:236.68px;width:10.4px;height:10.4px;border:1.4px solid #c2c2c2;border-radius:2.6px;box-sizing:border-box;background:#fff;"></div>
<svg style="left:1661.6px;top:236.28px;width:12.8px;height:11.2px;" viewBox="0 0 12 10"><path d="M0 0h12v2H0zM0 4h12v2H0zM0 8h12v2H0z" fill="#555"/></svg>
<div style="left:287.2px;top:283.72px;width:1396.8px;height:1.6px;background:#efefef;"></div>
<div style="left:291.8px;top:260.3px;height:20px;line-height:20px;font-size:9.7px;color:#1e1e1e;transform:scaleX(0.885);transform-origin:0 50%;">DOE</div>
<div style="left:420.6px;top:260.3px;height:20px;line-height:20px;font-size:9.7px;color:#1e1e1e;transform:scaleX(0.963);transform-origin:0 50%;">PM0004ARZZVQN1</div>
<div style="left:620.6px;top:260.3px;height:20px;line-height:20px;font-size:9.7px;color:#1e1e1e;transform:scaleX(1.017);transform-origin:0 50%;">125,10 €</div>
<div style="left:719.6px;top:260.3px;height:20px;line-height:20px;font-size:9.7px;color:#1e1e1e;transform:scaleX(0.921);transform-origin:0 50%;">EASYBILL-4RKWG4P99</div>
<div style="left:883.6px;top:260.3px;height:20px;line-height:20px;font-size:9.7px;color:#1e1e1e;transform:scaleX(1.018);transform-origin:0 50%;">MD0001NH6Z9QP8</div>
<div style="left:1071.6px;top:260.3px;height:20px;line-height:20px;font-size:9.7px;color:#1e1e1e;">FACT-20170505-00508</div>
<div style="left:1310.4px;top:263.74px;width:57px;height:13.4px;background:#1b7bb4;border-radius:1.8px;"></div>
<svg style="left:1314.1px;top:266.64px;width:8.6px;height:7.6px;" viewBox="0 0 10 10"><path d="M1 5.500l3 3 5-6" fill="none" stroke="#fff" stroke-width="2.300"/></svg>
<div style="left:1324.6px;top:260.1px;height:20px;line-height:20px;font-size:9.6px;color:#fff;font-weight:700;transform:scaleX(0.905);transform-origin:0 50%;">Récupéré</div>
<div style="left:1428.8px;top:260.3px;height:20px;line-height:20px;font-size:9.7px;color:#1e1e1e;transform:scaleX(1.040);transform-origin:50% 50%;width:202.2px;text-align:center;">03/08/2017</div>
<div style="left:1636.4px;top:265.44px;width:10.4px;height:10.4px;border:1.4px solid #c2c2c2;border-radius:2.6px;box-sizing:border-box;background:#fff;"></div>
<svg style="left:1661.6px;top:265.04px;width:12.8px;height:11.2px;" viewBox="0 0 12 10"><path d="M0 0h12v2H0zM0 4h12v2H0zM0 8h12v2H0z" fill="#555"/></svg>
<div style="left:287.2px;top:312.48px;width:1396.8px;height:1.6px;background:#efefef;"></div>
<div style="left:291.8px;top:289.06px;height:20px;line-height:20px;font-size:9.7px;color:#1e1e1e;transform:scaleX(0.885);transform-origin:0 50%;">DOE</div>
<div style="left:420.6px;top:289.06px;height:20px;line-height:20px;font-size:9.7px;color:#1e1e1e;transform:scaleX(0.963);transform-origin:0 50%;">PM0004ARYGMC20</div>
<div style="left:620.6px;top:289.06px;height:20px;line-height:20px;font-size:9.7px;color:#1e1e1e;transform:scaleX(1.017);transform-origin:0 50%;">125,10 €</div>
<div style="left:719.6px;top:289.06px;height:20px;line-height:20px;font-size:9.7px;color:#1e1e1e;transform:scaleX(0.921);transform-origin:0 50%;">EASYBILL-4RKWG4P99</div>
<div style="left:883.6px;top:289.06px;height:20px;line-height:20px;font-size:9.7px;color:#1e1e1e;transform:scaleX(1.018);transform-origin:0 50%;">MD0001NH6Z9QP8</div>
<div style="left:1071.6px;top:289.06px;height:20px;line-height:20px;font-size:9.7px;color:#1e1e1e;">FACT-20170505-00507</div>
<div style="left:1310.4px;top:292.5px;width:57px;height:13.4px;background:#1b7bb4;border-radius:1.8px;"></div>
<svg style="left:1314.1px;top:295.4px;width:8.6px;height:7.6px;" viewBox="0 0 10 10"><path d="M1 5.500l3 3 5-6" fill="none" stroke="#fff" stroke-width="2.300"/></svg>
<div style="left:1324.6px;top:288.86px;height:20px;line-height:20px;font-size:9.6px;color:#fff;font-weight:700;transform:scaleX(0.905);transform-origin:0 50%;">Récupéré</div>
<div style="left:1428.8px;top:289.06px;height:20px;line-height:20px;font-size:9.7px;color:#1e1e1e;transform:scaleX(1.040);transform-origin:50% 50%;width:202.2px;text-align:center;">03/08/2017</div>
<div style="left:1636.4px;top:294.2px;width:10.4px;height:10.4px;border:1.4px solid #c2c2c2;border-radius:2.6px;box-sizing:border-box;background:#fff;"></div>
<svg style="left:1661.6px;top:293.8px;width:12.8px;height:11.2px;" viewBox="0 0 12 10"><path d="M0 0h12v2H0zM0 4h12v2H0zM0 8h12v2H0z" fill="#555"/></svg>
<div style="left:287.2px;top:341.24px;width:1396.8px;height:1.6px;background:#efefef;"></div>
<div style="left:291.8px;top:317.82px;height:20px;line-height:20px;font-size:9.7px;color:#1e1e1e;transform:scaleX(0.885);transform-origin:0 50%;">DOE</div>
<div style="left:420.6px;top:317.82px;height:20px;line-height:20px;font-size:9.7px;color:#1e1e1e;transform:scaleX(0.963);transform-origin:0 50%;">PM0004ARYF916H</div>
<div style="left:620.6px;top:317.82px;height:20px;line-height:20px;font-size:9.7px;color:#1e1e1e;transform:scaleX(1.017);transform-origin:0 50%;">125,10 €</div>
<div style="left:719.6px;top:317.82px;height:20px;line-height:20px;font-size:9.7px;color:#1e1e1e;transform:scaleX(0.932);transform-origin:0 50%;">EASYBILL-WYD9W2F7G</div>
<div style="left:883.6px;top:317.82px;height:20px;line-height:20px;font-size:9.7px;color:#1e1e1e;">MD0001NH8DHGE5</div>
<div style="left:1071.6px;top:317.82px;height:20px;line-height:20px;font-size:9.7px;color:#1e1e1e;">FACT-20170505-00507</div>
<div style="left:1319.6px;top:321.26px;width:38.8px;height:13.4px;background:#f24d64;border-radius:1.8px;"></div>
<svg style="left:1323.2px;top:324.96px;width:6px;height:6px;" viewBox="0 0 10 10"><path d="M1.500 1.500l7 7M8.500 1.500l-7 7" stroke="#fff" stroke-width="2.800" fill="none"/></svg>
<div style="left:1330px;top:317.62px;height:20px;line-height:20px;font-size:9.6px;color:#fff;font-weight:700;transform:scaleX(0.877);transform-origin:0 50%;">Échec</div>
<div style="left:1428.8px;top:317.82px;height:20px;line-height:20px;font-size:9.7px;color:#1e1e1e;transform:scaleX(1.040);transform-origin:50% 50%;width:202.2px;text-align:center;">03/08/2017</div>
<div style="left:1636.4px;top:322.96px;width:10.4px;height:10.4px;border:1.4px solid #c2c2c2;border-radius:2.6px;box-sizing:border-box;background:#fff;"></div>
<svg style="left:1661.6px;top:322.56px;width:12.8px;height:11.2px;" viewBox="0 0 12 10"><path d="M0 0h12v2H0zM0 4h12v2H0zM0 8h12v2H0z" fill="#555"/></svg>
<div style="left:287.2px;top:370px;width:1396.8px;height:1.6px;background:#efefef;"></div>
<div style="left:291.8px;top:346.58px;height:20px;line-height:20px;font-size:9.7px;color:#1e1e1e;transform:scaleX(0.885);transform-origin:0 50%;">DOE</div>
<div style="left:420.6px;top:346.58px;height:20px;line-height:20px;font-size:9.7px;color:#1e1e1e;transform:scaleX(0.963);transform-origin:0 50%;">PM00047SPNF78E</div>
<div style="left:620.6px;top:346.58px;height:20px;line-height:20px;font-size:9.7px;color:#1e1e1e;transform:scaleX(1.017);transform-origin:0 50%;">41,70 €</div>
<div style="left:719.6px;top:346.58px;height:20px;line-height:20px;font-size:9.7px;color:#1e1e1e;transform:scaleX(0.932);transform-origin:0 50%;">EASYBILL-WYD9W2F7G</div>
<div style="left:883.6px;top:346.58px;height:20px;line-height:20px;font-size:9.7px;color:#1e1e1e;">MD0001NH8DHGE5</div>
<div style="left:1071.6px;top:346.58px;height:20px;line-height:20px;font-size:9.7px;color:#1e1e1e;">FACT-20170428-00504</div>
<div style="left:1319.6px;top:350.02px;width:38.8px;height:13.4px;background:#f24d64;border-radius:1.8px;"></div>
<svg style="left:1323.2px;top:353.72px;width:6px;height:6px;" viewBox="0 0 10 10"><path d="M1.500 1.500l7 7M8.500 1.500l-7 7" stroke="#fff" stroke-width="2.800" fill="none"/></svg>
<div style="left:1330px;top:346.38px;height:20px;line-height:20px;font-size:9.6px;color:#fff;font-weight:700;transform:scaleX(0.877);transform-origin:0 50%;">Échec</div>
<div style="left:1428.8px;top:346.58px;height:20px;line-height:20px;font-size:9.7px;color:#1e1e1e;transform:scaleX(1.040);transform-origin:50% 50%;width:202.2px;text-align:center;">28/06/2017</div>
<div style="left:1636.4px;top:351.72px;width:10.4px;height:10.4px;border:1.4px solid #c2c2c2;border-radius:2.6px;box-sizing:border-box;background:#fff;"></div>
<svg style="left:1661.6px;top:351.32px;width:12.8px;height:11.2px;" viewBox="0 0 12 10"><path d="M0 0h12v2H0zM0 4h12v2H0zM0 8h12v2H0z" fill="#555"/></svg>
<div style="left:287.2px;top:398.76px;width:1396.8px;height:1.6px;background:#efefef;"></div>
<div style="left:291.8px;top:375.34px;height:20px;line-height:20px;font-size:9.7px;color:#1e1e1e;transform:scaleX(0.885);transform-origin:0 50%;">DOE</div>
<div style="left:420.6px;top:375.34px;height:20px;line-height:20px;font-size:9.7px;color:#1e1e1e;transform:scaleX(0.963);transform-origin:0 50%;">PM00047SPMRWZ9</div>
<div style="left:620.6px;top:375.34px;height:20px;line-height:20px;font-size:9.7px;color:#1e1e1e;transform:scaleX(1.017);transform-origin:0 50%;">41,70 €</div>
<div style="left:719.6px;top:375.34px;height:20px;line-height:20px;font-size:9.7px;color:#1e1e1e;transform:scaleX(0.932);transform-origin:0 50%;">EASYBILL-WYD9W2F7G</div>
<div style="left:883.6px;top:375.34px;height:20px;line-height:20px;font-size:9.7px;color:#1e1e1e;">MD0001NH8DHGE5</div>
<div style="left:1071.6px;top:375.34px;height:20px;line-height:20px;font-size:9.7px;color:#1e1e1e;">FACT-20170428-00504</div>
<div style="left:1319.6px;top:378.78px;width:38.8px;height:13.4px;background:#f24d64;border-radius:1.8px;"></div>
<svg style="left:1323.2px;top:382.48px;width:6px;height:6px;" viewBox="0 0 10 10"><path d="M1.500 1.500l7 7M8.500 1.500l-7 7" stroke="#fff" stroke-width="2.800" fill="none"/></svg>
<div style="left:1330px;top:375.14px;height:20px;line-height:20px;font-size:9.6px;color:#fff;font-weight:700;transform:scaleX(0.877);transform-origin:0 50%;">Échec</div>
<div style="left:1428.8px;top:375.34px;height:20px;line-height:20px;font-size:9.7px;color:#1e1e1e;transform:scaleX(1.040);transform-origin:50% 50%;width:202.2px;text-align:center;">28/05/2017</div>
<div style="left:1636.4px;top:380.48px;width:10.4px;height:10.4px;border:1.4px solid #c2c2c2;border-radius:2.6px;box-sizing:border-box;background:#fff;"></div>
<svg style="left:1661.6px;top:380.08px;width:12.8px;height:11.2px;" viewBox="0 0 12 10"><path d="M0 0h12v2H0zM0 4h12v2H0zM0 8h12v2H0z" fill="#555"/></svg>
<div style="left:287.2px;top:427.52px;width:1396.8px;height:1.6px;background:#efefef;"></div>
<div style="left:291.8px;top:404.1px;height:20px;line-height:20px;font-size:9.7px;color:#1e1e1e;transform:scaleX(0.885);transform-origin:0 50%;">DOE</div>
<div style="left:420.6px;top:404.1px;height:20px;line-height:20px;font-size:9.7px;color:#1e1e1e;transform:scaleX(0.963);transform-origin:0 50%;">PM00047SPKPVGO</div>
<div style="left:620.6px;top:404.1px;height:20px;line-height:20px;font-size:9.7px;color:#1e1e1e;transform:scaleX(1.017);transform-origin:0 50%;">41,70 €</div>
<div style="left:719.6px;top:404.1px;height:20px;line-height:20px;font-size:9.7px;color:#1e1e1e;transform:scaleX(0.932);transform-origin:0 50%;">EASYBILL-WYD9W2F7G</div>
<div style="left:883.6px;top:404.1px;height:20px;line-height:20px;font-size:9.7px;color:#1e1e1e;">MD0001NH8DHGE5</div>
<div style="left:1071.6px;top:404.1px;height:20px;line-height:20px;font-size:9.7px;color:#1e1e1e;">FACT-20170428-00504</div>
<div style="left:1319.6px;top:407.54px;width:38.8px;height:13.4px;background:#f24d64;border-radius:1.8px;"></div>
<svg style="left:1323.2px;top:411.24px;width:6px;height:6px;" viewBox="0 0 10 10"><path d="M1.500 1.500l7 7M8.500 1.500l-7 7" stroke="#fff" stroke-width="2.800" fill="none"/></svg>
<div style="left:1330px;top:403.9px;height:20px;line-height:20px;font-size:9.6px;color:#fff;font-weight:700;transform:scaleX(0.877);transform-origin:0 50%;">Échec</div>
<div style="left:1428.8px;top:404.1px;height:20px;line-height:20px;font-size:9.7px;color:#1e1e1e;transform:scaleX(1.040);transform-origin:50% 50%;width:202.2px;text-align:center;">06/05/2017</div>
<div style="left:1636.4px;top:409.24px;width:10.4px;height:10.4px;border:1.4px solid #c2c2c2;border-radius:2.6px;box-sizing:border-box;background:#fff;"></div>
<svg style="left:1661.6px;top:408.84px;width:12.8px;height:11.2px;" viewBox="0 0 12 10"><path d="M0 0h12v2H0zM0 4h12v2H0zM0 8h12v2H0z" fill="#555"/></svg>
<div style="left:287.2px;top:456.28px;width:1396.8px;height:1.6px;background:#efefef;"></div>
<div style="left:291.8px;top:432.86px;height:20px;line-height:20px;font-size:9.7px;color:#1e1e1e;transform:scaleX(0.885);transform-origin:0 50%;">DOE</div>
<div style="left:420.6px;top:432.86px;height:20px;line-height:20px;font-size:9.7px;color:#1e1e1e;transform:scaleX(0.963);transform-origin:0 50%;">PM00047SNMZ188</div>
<div style="left:620.6px;top:432.86px;height:20px;line-height:20px;font-size:9.7px;color:#1e1e1e;transform:scaleX(1.017);transform-origin:0 50%;">41,70 €</div>
<div style="left:719.6px;top:432.86px;height:20px;line-height:20px;font-size:9.7px;color:#1e1e1e;transform:scaleX(0.932);transform-origin:0 50%;">EASYBILL-WYD9W2F7G</div>
<div style="left:883.6px;top:432.86px;height:20px;line-height:20px;font-size:9.7px;color:#1e1e1e;">MD0001NH8DHGE5</div>
<div style="left:1071.6px;top:432.86px;height:20px;line-height:20px;font-size:9.7px;color:#1e1e1e;">FACT-20170428-00504</div>
<div style="left:1319.6px;top:436.3px;width:38.8px;height:13.4px;background:#f24d64;border-radius:1.8px;"></div>
<svg style="left:1323.2px;top:440px;width:6px;height:6px;" viewBox="0 0 10 10"><path d="M1.500 1.500l7 7M8.500 1.500l-7 7" stroke="#fff" stroke-width="2.800" fill="none"/></svg>
<div style="left:1330px;top:432.66px;height:20px;line-height:20px;font-size:9.6px;color:#fff;font-weight:700;transform:scaleX(0.877);transform-origin:0 50%;">Échec</div>
<div style="left:1428.8px;top:432.86px;height:20px;line-height:20px;font-size:9.7px;color:#1e1e1e;transform:scaleX(1.040);transform-origin:50% 50%;width:202.2px;text-align:center;">28/06/2017</div>
<div style="left:1636.4px;top:438px;width:10.4px;height:10.4px;border:1.4px solid #c2c2c2;border-radius:2.6px;box-sizing:border-box;background:#fff;"></div>
<svg style="left:1661.6px;top:437.6px;width:12.8px;height:11.2px;" viewBox="0 0 12 10"><path d="M0 0h12v2H0zM0 4h12v2H0zM0 8h12v2H0z" fill="#555"/></svg>
<div style="left:287.2px;top:485.04px;width:1396.8px;height:1.6px;background:#efefef;"></div>
<div style="left:291.8px;top:461.62px;height:20px;line-height:20px;font-size:9.7px;color:#1e1e1e;transform:scaleX(0.885);transform-origin:0 50%;">DOE</div>
<div style="left:420.6px;top:461.62px;height:20px;line-height:20px;font-size:9.7px;color:#1e1e1e;transform:scaleX(0.963);transform-origin:0 50%;">PM00047SNKFGVH</div>
<div style="left:620.6px;top:461.62px;height:20px;line-height:20px;font-size:9.7px;color:#1e1e1e;transform:scaleX(1.017);transform-origin:0 50%;">41,70 €</div>
<div style="left:719.6px;top:461.62px;height:20px;line-height:20px;font-size:9.7px;color:#1e1e1e;transform:scaleX(0.932);transform-origin:0 50%;">EASYBILL-WYD9W2F7G</div>
<div style="left:883.6px;top:461.62px;height:20px;line-height:20px;font-size:9.7px;color:#1e1e1e;">MD0001NH8DHGE5</div>
<div style="left:1071.6px;top:461.62px;height:20px;line-height:20px;font-size:9.7px;color:#1e1e1e;">FACT-20170428-00504</div>
<div style="left:1319.6px;top:465.06px;width:38.8px;height:13.4px;background:#f24d64;border-radius:1.8px;"></div>
<svg style="left:1323.2px;top:468.76px;width:6px;height:6px;" viewBox="0 0 10 10"><path d="M1.500 1.500l7 7M8.500 1.500l-7 7" stroke="#fff" stroke-width="2.800" fill="none"/></svg>
<div style="left:1330px;top:461.42px;height:20px;line-height:20px;font-size:9.6px;color:#fff;font-weight:700;transform:scaleX(0.877);transform-origin:0 50%;">Échec</div>
<div style="left:1428.8px;top:461.62px;height:20px;line-height:20px;font-size:9.7px;color:#1e1e1e;transform:scaleX(1.040);transform-origin:50% 50%;width:202.2px;text-align:center;">28/05/2017</div>
<div style="left:1636.4px;top:466.76px;width:10.4px;height:10.4px;border:1.4px solid #c2c2c2;border-radius:2.6px;box-sizing:border-box;background:#fff;"></div>
<svg style="left:1661.6px;top:466.36px;width:12.8px;height:11.2px;" viewBox="0 0 12 10"><path d="M0 0h12v2H0zM0 4h12v2H0zM0 8h12v2H0z" fill="#555"/></svg>
<div style="left:287.2px;top:513.8px;width:1396.8px;height:1.6px;background:#efefef;"></div>
<div style="left:291.8px;top:490.38px;height:20px;line-height:20px;font-size:9.7px;color:#1e1e1e;transform:scaleX(0.885);transform-origin:0 50%;">DOE</div>
<div style="left:420.6px;top:490.38px;height:20px;line-height:20px;font-size:9.7px;color:#1e1e1e;transform:scaleX(0.963);transform-origin:0 50%;">PM00047SNJQ03V</div>
<div style="left:620.6px;top:490.38px;height:20px;line-height:20px;font-size:9.7px;color:#1e1e1e;transform:scaleX(1.017);transform-origin:0 50%;">41,70 €</div>
<div style="left:719.6px;top:490.38px;height:20px;line-height:20px;font-size:9.7px;color:#1e1e1e;transform:scaleX(0.932);transform-origin:0 50%;">EASYBILL-WYD9W2F7G</div>
<div style="left:883.6px;top:490.38px;height:20px;line-height:20px;font-size:9.7px;color:#1e1e1e;">MD0001NH8DHGE5</div>
<div style="left:1071.6px;top:490.38px;height:20px;line-height:20px;font-size:9.7px;color:#1e1e1e;">FACT-20170428-00504</div>
<div style="left:1319.6px;top:493.82px;width:38.8px;height:13.4px;background:#f24d64;border-radius:1.8px;"></div>
<svg style="left:1323.2px;top:497.52px;width:6px;height:6px;" viewBox="0 0 10 10"><path d="M1.500 1.500l7 7M8.500 1.500l-7 7" stroke="#fff" stroke-width="2.800" fill="none"/></svg>
<div style="left:1330px;top:490.18px;height:20px;line-height:20px;font-size:9.6px;color:#fff;font-weight:700;transform:scaleX(0.877);transform-origin:0 50%;">Échec</div>
<div style="left:1428.8px;top:490.38px;height:20px;line-height:20px;font-size:9.7px;color:#1e1e1e;transform:scaleX(1.040);transform-origin:50% 50%;width:202.2px;text-align:center;">06/05/2017</div>
<div style="left:1636.4px;top:495.52px;width:10.4px;height:10.4px;border:1.4px solid #c2c2c2;border-radius:2.6px;box-sizing:border-box;background:#fff;"></div>
<svg style="left:1661.6px;top:495.12px;width:12.8px;height:11.2px;" viewBox="0 0 12 10"><path d="M0 0h12v2H0zM0 4h12v2H0zM0 8h12v2H0z" fill="#555"/></svg>
<div style="left:1285.4px;top:333.2px;width:164.6px;height:63.6px;background:#fff;border:1.2px solid #dcdcdc;border-radius:3.2px;box-sizing:border-box;box-shadow:0 2px 6px rgba(0,0,0,.2);"></div>
<div style="left:1311.4px;top:334.8px;width:1.2px;height:60.4px;background:#ececec;"></div>
<div style="left:1317px;top:335.64px;height:20px;line-height:20px;font-size:10.1px;color:#737373;">Voir la fiche du client</div>
<div style="left:1317px;top:355.84px;height:20px;line-height:20px;font-size:10.1px;color:#737373;">Voir le document</div>
<div style="left:1317px;top:375.44px;height:20px;line-height:20px;font-size:10.1px;color:#737373;">Réitérer 0/3</div>
<svg style="left:1294px;top:339.5px;width:9.6px;height:11px;" viewBox="0 0 10 12"><circle cx="5" cy="3" r="2.600" fill="#444"/><path d="M.4 12V9.500C.4 7.500 2 6.400 5 6.400s4.600 1.100 4.600 3.100V12z" fill="#444"/></svg>
<svg style="left:1294.3px;top:359.8px;width:9px;height:11.2px;" viewBox="0 0 10.3 12"><path d="M1 .7h5.500L9.300 3.500v7.800H1z" fill="none" stroke="#555" stroke-width="1"/><path d="M6.300.9v2.800h2.800M3 6h4.400M3 8h4.400" fill="none" stroke="#555" stroke-width=".8"/></svg>
<svg style="left:1293.2px;top:379.6px;width:11.2px;height:11.2px;" viewBox="0 0 16 16"><path d="M13 8a5 5 0 0 1-9 3M3 8a5 5 0 0 1 9-3" fill="none" stroke="#444" stroke-width="1.900"/><path d="M13.400 1.500V6.200H8.700zM2.600 14.500V9.800h4.700z" fill="#444"/></svg>
<div style="left:1480.2px;top:878.2px;width:200.2px;height:9.8px;background:#3b7ed6;border-top:1px solid #2f6fc6;box-sizing:border-box;border-radius:0 0 8px 0;"></div>
<div style="left:1484px;top:885.2px;width:72px;height:2.4px;background:repeating-linear-gradient(90deg,rgba(255,255,255,.35) 0 2.4px,rgba(255,255,255,0) 2.4px 5.2px);"></div>
</div>
</body></html>
